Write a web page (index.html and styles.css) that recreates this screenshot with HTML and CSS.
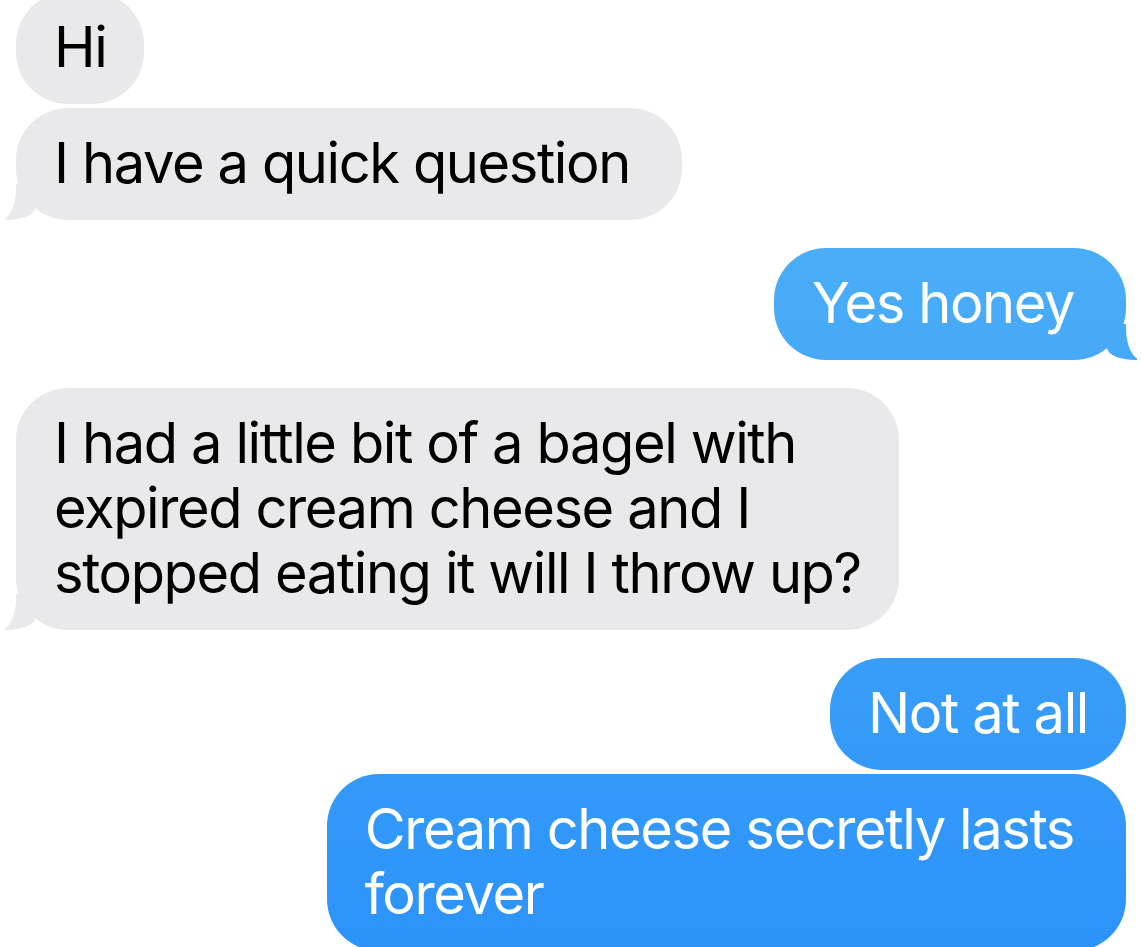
FILE: index.html
```html
<!DOCTYPE html>
<html lang="en">
<head>
<meta charset="utf-8">
<title>Messages</title>
<link rel="stylesheet" href="styles.css">
</head>
<body>
<main class="thread">
  <div class="bubble them first">Hi</div>
  <div class="bubble them tail near">I have a quick question&nbsp;</div>
  <div class="bubble me tail group">Yes honey</div>
  <div class="bubble them tail group">I had a little bit of a bagel with<br>expired cream cheese and I<br>stopped eating it will I throw up?</div>
  <div class="bubble me group">Not at all</div>
  <div class="bubble me tail-pad near">Cream cheese secretly lasts<br>forever</div>
</main>
</body>
</html>
```
FILE: styles.css
```css
html, body {
  margin: 0;
  padding: 0;
  background: #ffffff;
  overflow: hidden;
}

.thread {
  height: 947px;
  box-sizing: border-box;
  padding: 0 16px;
  display: flex;
  flex-direction: column;
  overflow: hidden;
  font-family: "Inter", "Roboto", "Liberation Sans", sans-serif;
}

.bubble {
  position: relative;
  flex: none;
  font-size: 56px;
  line-height: 65px;
  letter-spacing: -1.4px;
  padding: 23px 38px 24px 38px;
  border-radius: 52px;
}

.first { margin-top: -8px; }
.near { margin-top: 4px; }
.group { margin-top: 28px; }

.them {
  align-self: flex-start;
  background: #e9e9eb;
  color: #000000;
}

.me {
  align-self: flex-end;
  color: #ffffff;
  background: linear-gradient(to bottom, #55b7f7 0px, #2c93fa 947px) fixed;
}

.me.tail,
.me.tail-pad { padding-right: 52px; }

.tail::before,
.tail::after {
  content: "";
  position: absolute;
  bottom: 0;
}

/* tail on the left, grey bubbles */
.them.tail::before {
  left: -11px;
  width: 30px;
  height: 36px;
  background: #e9e9eb;
  border-bottom-right-radius: 29px 12px;
}
.them.tail::after {
  left: -40px;
  width: 40px;
  height: 36px;
  background: #ffffff;
  border-bottom-right-radius: 16px 31px;
}

/* tail on the right, blue bubbles */
.me.tail::before {
  right: -11px;
  width: 30px;
  height: 36px;
  background: linear-gradient(to bottom, #55b7f7 0px, #2c93fa 947px) fixed;
  border-bottom-left-radius: 29px 12px;
}
.me.tail::after {
  right: -40px;
  width: 40px;
  height: 36px;
  background: #ffffff;
  border-bottom-left-radius: 16px 31px;
}
```
